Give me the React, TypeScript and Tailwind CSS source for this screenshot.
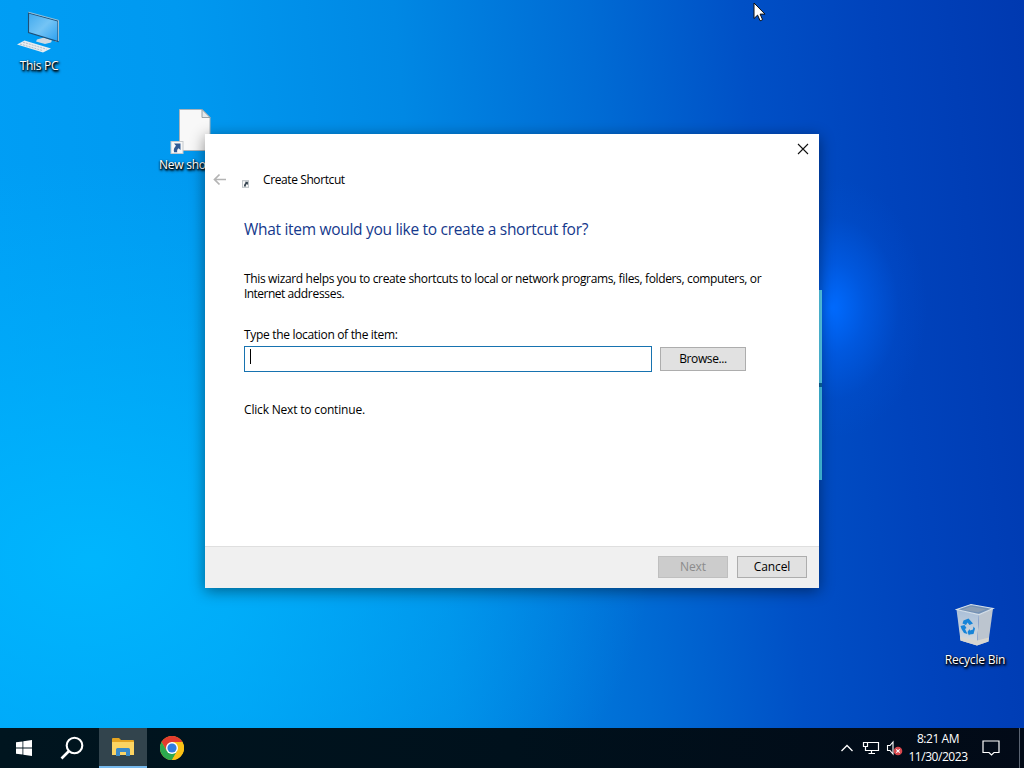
import React from "react";

function PcIcon() {
  return (
    <svg width="44" height="42" viewBox="0 0 44 42">
      <defs>
        <linearGradient id="pc" x1="0" y1="0" x2="1" y2="1">
          <stop offset="0" stopColor="#3fa9ee" />
          <stop offset="0.5" stopColor="#74c4f5" />
          <stop offset="1" stopColor="#2a9ff0" />
        </linearGradient>
      </defs>
      <path d="M20 28.500l7-2 8 3-1 2-6 1.500-9-2.500z" fill="#cfdae2" />
      <path d="M11 1.500l31 8.500-1 20.500-2 .5z" fill="#b9cad6" />
      <path d="M11.500 2L41 10V30.500L11.500 21.500z" fill="url(#pc)" stroke="#1f4f76" strokeWidth="1.100" />
      <path d="M11.500 1.200L41.500 9.300V30" fill="none" stroke="#b5cbd8" strokeWidth=".8" />
      <path d="M0 33.500L7.500 29.500l26.500 8-8 4z" fill="#e6ecf0" />
      <path d="M3 33l23 6.700M6 31.200l23.500 7" stroke="#9fb3c2" strokeWidth=".8" strokeDasharray="2 1" />
    </svg>
  );
}

function ShortcutIcon() {
  return (
    <svg width="44" height="46" viewBox="0 0 44 46">
      <path d="M9.500 1.500H32l8 8V42.500H9.500z" fill="#f8f8f8" stroke="#a9b3ba" />
      <path d="M32 1.500V9.500H40z" fill="#e4e8ea" stroke="#8d999f" strokeWidth=".9" />
      <g transform="translate(.5 33)">
        <rect x=".5" y=".5" width="12" height="12" fill="#f8f8f8" stroke="#c4c9cd" />
        <path d="M3.500 2.500H10V9L8 7.200C6.800 8.200 6.300 9.600 6.800 11.300H3.600C2.800 8.800 3.600 6.600 5.500 4.800z" fill="#2f5a94" />
      </g>
    </svg>
  );
}

function BinIcon() {
  return (
    <svg width="40" height="44" viewBox="0 0 40 44">
      <defs>
        <linearGradient id="bin" x1="0" y1="0" x2="0" y2="1">
          <stop offset="0" stopColor="#a9bfd9" />
          <stop offset="1" stopColor="#d9dcdd" />
        </linearGradient>
      </defs>
      <path d="M1.500 6.500L24 11.500l-2 31L5.500 37.500z" fill="url(#bin)" />
      <path d="M24 11.500l14-6-4.500 33L22 42.500z" fill="#bcc5cf" />
      <path d="M1.500 6.500L16 1.500 38 5.500 24 11.500z" fill="#7391b5" stroke="#d5dfe8" strokeWidth="1.200" />
      <path d="M7 6.700l9-3.200 15 2.800-8 3z" fill="#8b9eb4" />
      <path d="M5 34l17 3.500 12-3-.5 4L22 42.500 5.500 37.500z" fill="#d8d6d0" />
      <g fill="#1684d8">
        <path d="M8.500 17.500l5-2 4.500 5-3.500 1.500-2-2.500-1.500 2.500-3.500-1.500z" />
        <path d="M5.500 23l4-1 2 3-1.500 1 2.500 5-3.500-1-2.500-4z" />
        <path d="M12.500 29l2-3 .5 1.500 3-1 .5-3 1.500 2-1.500 5.500-4 .5-.5 1z" />
      </g>
    </svg>
  );
}

function DesktopItem({ icon, label, className, labelClass }: { icon: React.ReactNode; label: string; className: string; labelClass: string }) {
  return (
    <div className={`absolute flex w-[76px] flex-col items-center ${className}`}>
      {icon}
      <span className={`whitespace-nowrap text-[12px] leading-4 text-white [text-shadow:0_1px_2px_#000,1px_1px_2px_#000,1px_2px_3px_#000] ${labelClass}`}>{label}</span>
    </div>
  );
}

function Wizard() {
  return (
    <section className="absolute left-[205px] top-[134px] flex h-[454px] w-[614px] flex-col bg-white text-[12px] text-black shadow-[0_3px_14px_rgba(0,0,0,0.45)]">
      <div className="flex h-[30px] justify-end pr-[10px] pt-[9px]">
        <svg width="12" height="12" viewBox="0 0 12 12"><path d="M1 1l10 10M11 1L1 11" stroke="#111" strokeWidth="1.100" /></svg>
      </div>
      <header className="flex h-8 items-center pl-[8px]">
        <svg width="14" height="14" viewBox="0 0 14 14"><path d="M13 6.500H1.500M6.500 1.500l-5 5 5 5" fill="none" stroke="#b4b4b4" strokeWidth="1.700" /></svg>
        <svg className="ml-[15px] mt-[7px]" width="7" height="8" viewBox="0 0 13 13">
          <rect x=".5" y=".5" width="12" height="12" fill="#f8f8f8" stroke="#a4adb2" strokeWidth="1.500" />
          <path d="M5.500 2.500H11V8.500L9 6.700C7.600 7.900 6.900 9.300 7.200 11H3.800C3.500 8.200 4.500 6 6.700 4.700z" fill="#34434f" />
        </svg>
        <span className="ml-[14px] tracking-[-0.4px]">Create Shortcut</span>
      </header>
      <main className="flex flex-1 flex-col items-start pl-[39px]">
        <h1 className="mt-[21px] whitespace-nowrap text-[15.5px] leading-6 tracking-[-0.3px] text-[#15398c]">What item would you like to create a shortcut for?</h1>
        <p className="mt-[30px] whitespace-nowrap leading-[15px] tracking-[-0.35px]">
          This wizard helps you to create shortcuts to local or network programs, files, folders, computers, or
          <br />
          <span className="tracking-[-0.55px]">Internet</span> <span className="tracking-[-0.3px]">addresses.</span>
        </p>
        <label className="mt-[26px] leading-[15px] tracking-[-0.32px]">Type the location of the item:</label>
        <div className="mt-[4px] flex items-center gap-2">
          <div className="flex h-[26px] w-[408px] border border-[#1773b0] bg-white pl-[5px] pt-[2px]"><span className="h-[15px] w-px bg-black" /></div>
          <button className="h-6 w-[86px] border border-[#adadad] bg-[#e1e1e1] tracking-[-0.4px]">Browse...</button>
        </div>
        <p className="mt-[30px] leading-[15px] tracking-[-0.18px]">Click Next to continue.</p>
      </main>
      <footer className="flex h-[42px] justify-end gap-[9px] border-t border-[#dfdfdf] bg-[#f0f0f0] pr-3 pt-[9px]">
        <button className="h-[22px] w-[70px] border border-[#bfbfbf] bg-[#cccccc] leading-none tracking-[-0.13px] text-[#8b8b8b]">Next</button>
        <button className="h-[22px] w-[70px] border border-[#adadad] bg-[#e1e1e1] leading-none tracking-[-0.13px]">Cancel</button>
      </footer>
    </section>
  );
}

function Taskbar() {
  return (
    <footer className="flex h-10 shrink-0 justify-between bg-[linear-gradient(90deg,#00151f,#00111c_50%,#020a17)] text-white">
      <div className="flex">
        <div className="flex w-[48px] items-center justify-center">
          <svg width="16" height="16" viewBox="0 0 16 16" fill="#fff"><path d="M0 2.300L6.500 1.400V7.500H0zM7.300 1.300L16 0V7.500H7.300zM0 8.400H6.500V14.600L0 13.700zM7.300 8.400H16V16L7.300 14.700z" /></svg>
        </div>
        <div className="flex w-[51px] items-center justify-center">
          <svg className="mr-[3px]" width="24" height="24" viewBox="0 0 24 24" fill="none" stroke="#fff"><circle cx="14.500" cy="9.500" r="7.800" strokeWidth="2.100" /><path d="M9 15l-7.500 7.500" strokeWidth="2.600" /></svg>
        </div>
        <div className="flex w-[48px] items-center justify-center border-b-2 border-[#76b9ed] bg-[#32444d]">
          <svg width="22" height="20" viewBox="0 0 22 20">
            <path d="M0 2a1 1 0 011-1h6l2 2h12a1 1 0 011 1v4H0z" fill="#e5a421" />
            <path d="M0 5h22v13H0z" fill="#fcd462" />
            <path d="M4 19v-6.500A1.500 1.500 0 015.500 11h11a1.500 1.500 0 011.500 1.500V19h-4v-4H8v4z" fill="#3b8ac8" />
            <path d="M8 15h6v3H8z" fill="#fbd568" />
          </svg>
        </div>
        <div className="flex w-[50px] items-center justify-center">
          <svg width="24" height="24" viewBox="0 0 24 24">
            <circle cx="12" cy="12" r="12" fill="#fbc116" />
            <path d="M12 6h10.400A12 12 0 001.600 6L6.800 15z" fill="#e33b2e" />
            <path d="M1.600 6A12 12 0 0012 24l5.200-9L6.800 15z" fill="#2da94f" />
            <path d="M12 6H22.400A12 12 0 0112 24l5.200-9z" fill="#fbc116" />
            <circle cx="12" cy="12" r="6" fill="#fff" /><circle cx="12" cy="12" r="4.600" fill="#307de1" />
          </svg>
        </div>
      </div>
      <div className="flex items-center">
        <svg width="12" height="8" viewBox="0 0 12 8" fill="none" stroke="#fff" strokeWidth="1.300"><path d="M.5 7L6 1.500 11.500 7" /></svg>
        <svg className="ml-[9px]" width="18" height="16" viewBox="0 0 18 16" fill="none" stroke="#fff"><path d="M6 2.500H16.500V10.500H3.500V6.500M1.500 2.500h4v4h-4zM9.500 10.500v3M6.500 13.500h6.500" strokeWidth="1.200" /></svg>
        <svg className="ml-[6px]" width="18" height="18" viewBox="0 0 18 18">
          <path d="M1.500 6.500H4l3-3.500v12L4 11.500H1.500z" fill="none" stroke="#fff" strokeWidth="1.100" />
          <circle cx="12" cy="12" r="4.300" fill="#d8474d" /><path d="M10.300 10.300l3.400 3.400M13.700 10.300l-3.400 3.400" stroke="#fff" strokeWidth="1.100" />
        </svg>
        <div className="ml-[2px] mr-px w-[64px] whitespace-nowrap text-center text-[12px] leading-[18px] tracking-[-0.45px]"><div>8:21 AM</div><div>11/30/2023</div></div>
        <svg className="ml-[11px]" width="18" height="18" viewBox="0 0 18 18" fill="none" stroke="#fff" strokeWidth="1.200"><path d="M1 2H17V13.500H12L9.500 16 7 13.500H1z" /></svg>
        <div className="ml-[19px] h-10 w-[5px] border-l border-[#5b6472]" />
      </div>
    </footer>
  );
}

export default function App() {
  return (
    <div className="relative flex h-[768px] w-[1024px] flex-col overflow-hidden font-['Open_Sans','Noto_Sans',sans-serif]">
      <div className="relative flex-1 overflow-hidden bg-[radial-gradient(ellipse_95px_130px_at_832px_308px,#006bff_0%,rgba(0,98,242,0.6)_35%,rgba(0,85,220,0.2)_70%,rgba(0,80,210,0)_100%),radial-gradient(ellipse_560px_400px_at_90px_560px,rgba(0,186,255,0.85),rgba(0,180,252,0.5)_50%,rgba(0,180,255,0)_100%),linear-gradient(85deg,#009ff6_0%,#0099f0_22%,#0088e4_42%,#006bd4_60%,#0050c6_74%,#0043bc_86%,#0039b0_100%)]">
        <DesktopItem className="left-[1px] top-[11px]" labelClass="mt-[5px] tracking-[-0.3px]" icon={<PcIcon />} label="This PC" />
        <DesktopItem className="left-[154px] top-[108px]" labelClass="mt-[3px] pl-[6px] tracking-[-0.25px]" icon={<ShortcutIcon />} label="New shortcut" />
        <DesktopItem className="left-[937px] top-[603px]" labelClass="mt-[5px] tracking-[-0.2px]" icon={<BinIcon />} label="Recycle Bin" />
        <div className="absolute left-[816px] top-[290px] z-0 flex h-[190px] w-[6px] flex-col gap-[4px] bg-[#0a6aa8]">
          <div className="flex-1 bg-[#5cdcff]" />
          <div className="flex-1 bg-[#48d0f5]" />
        </div>
        <Wizard />
        <svg className="absolute left-[753px] top-[2px]" width="13" height="20" viewBox="0 0 13 20"><path d="M1 1v15.500l3.600-3.400 2.500 5.700 2.500-1.100-2.500-5.600H12z" fill="#fff" stroke="#111" strokeWidth="1" /></svg>
      </div>
      <Taskbar />
    </div>
  );
}
